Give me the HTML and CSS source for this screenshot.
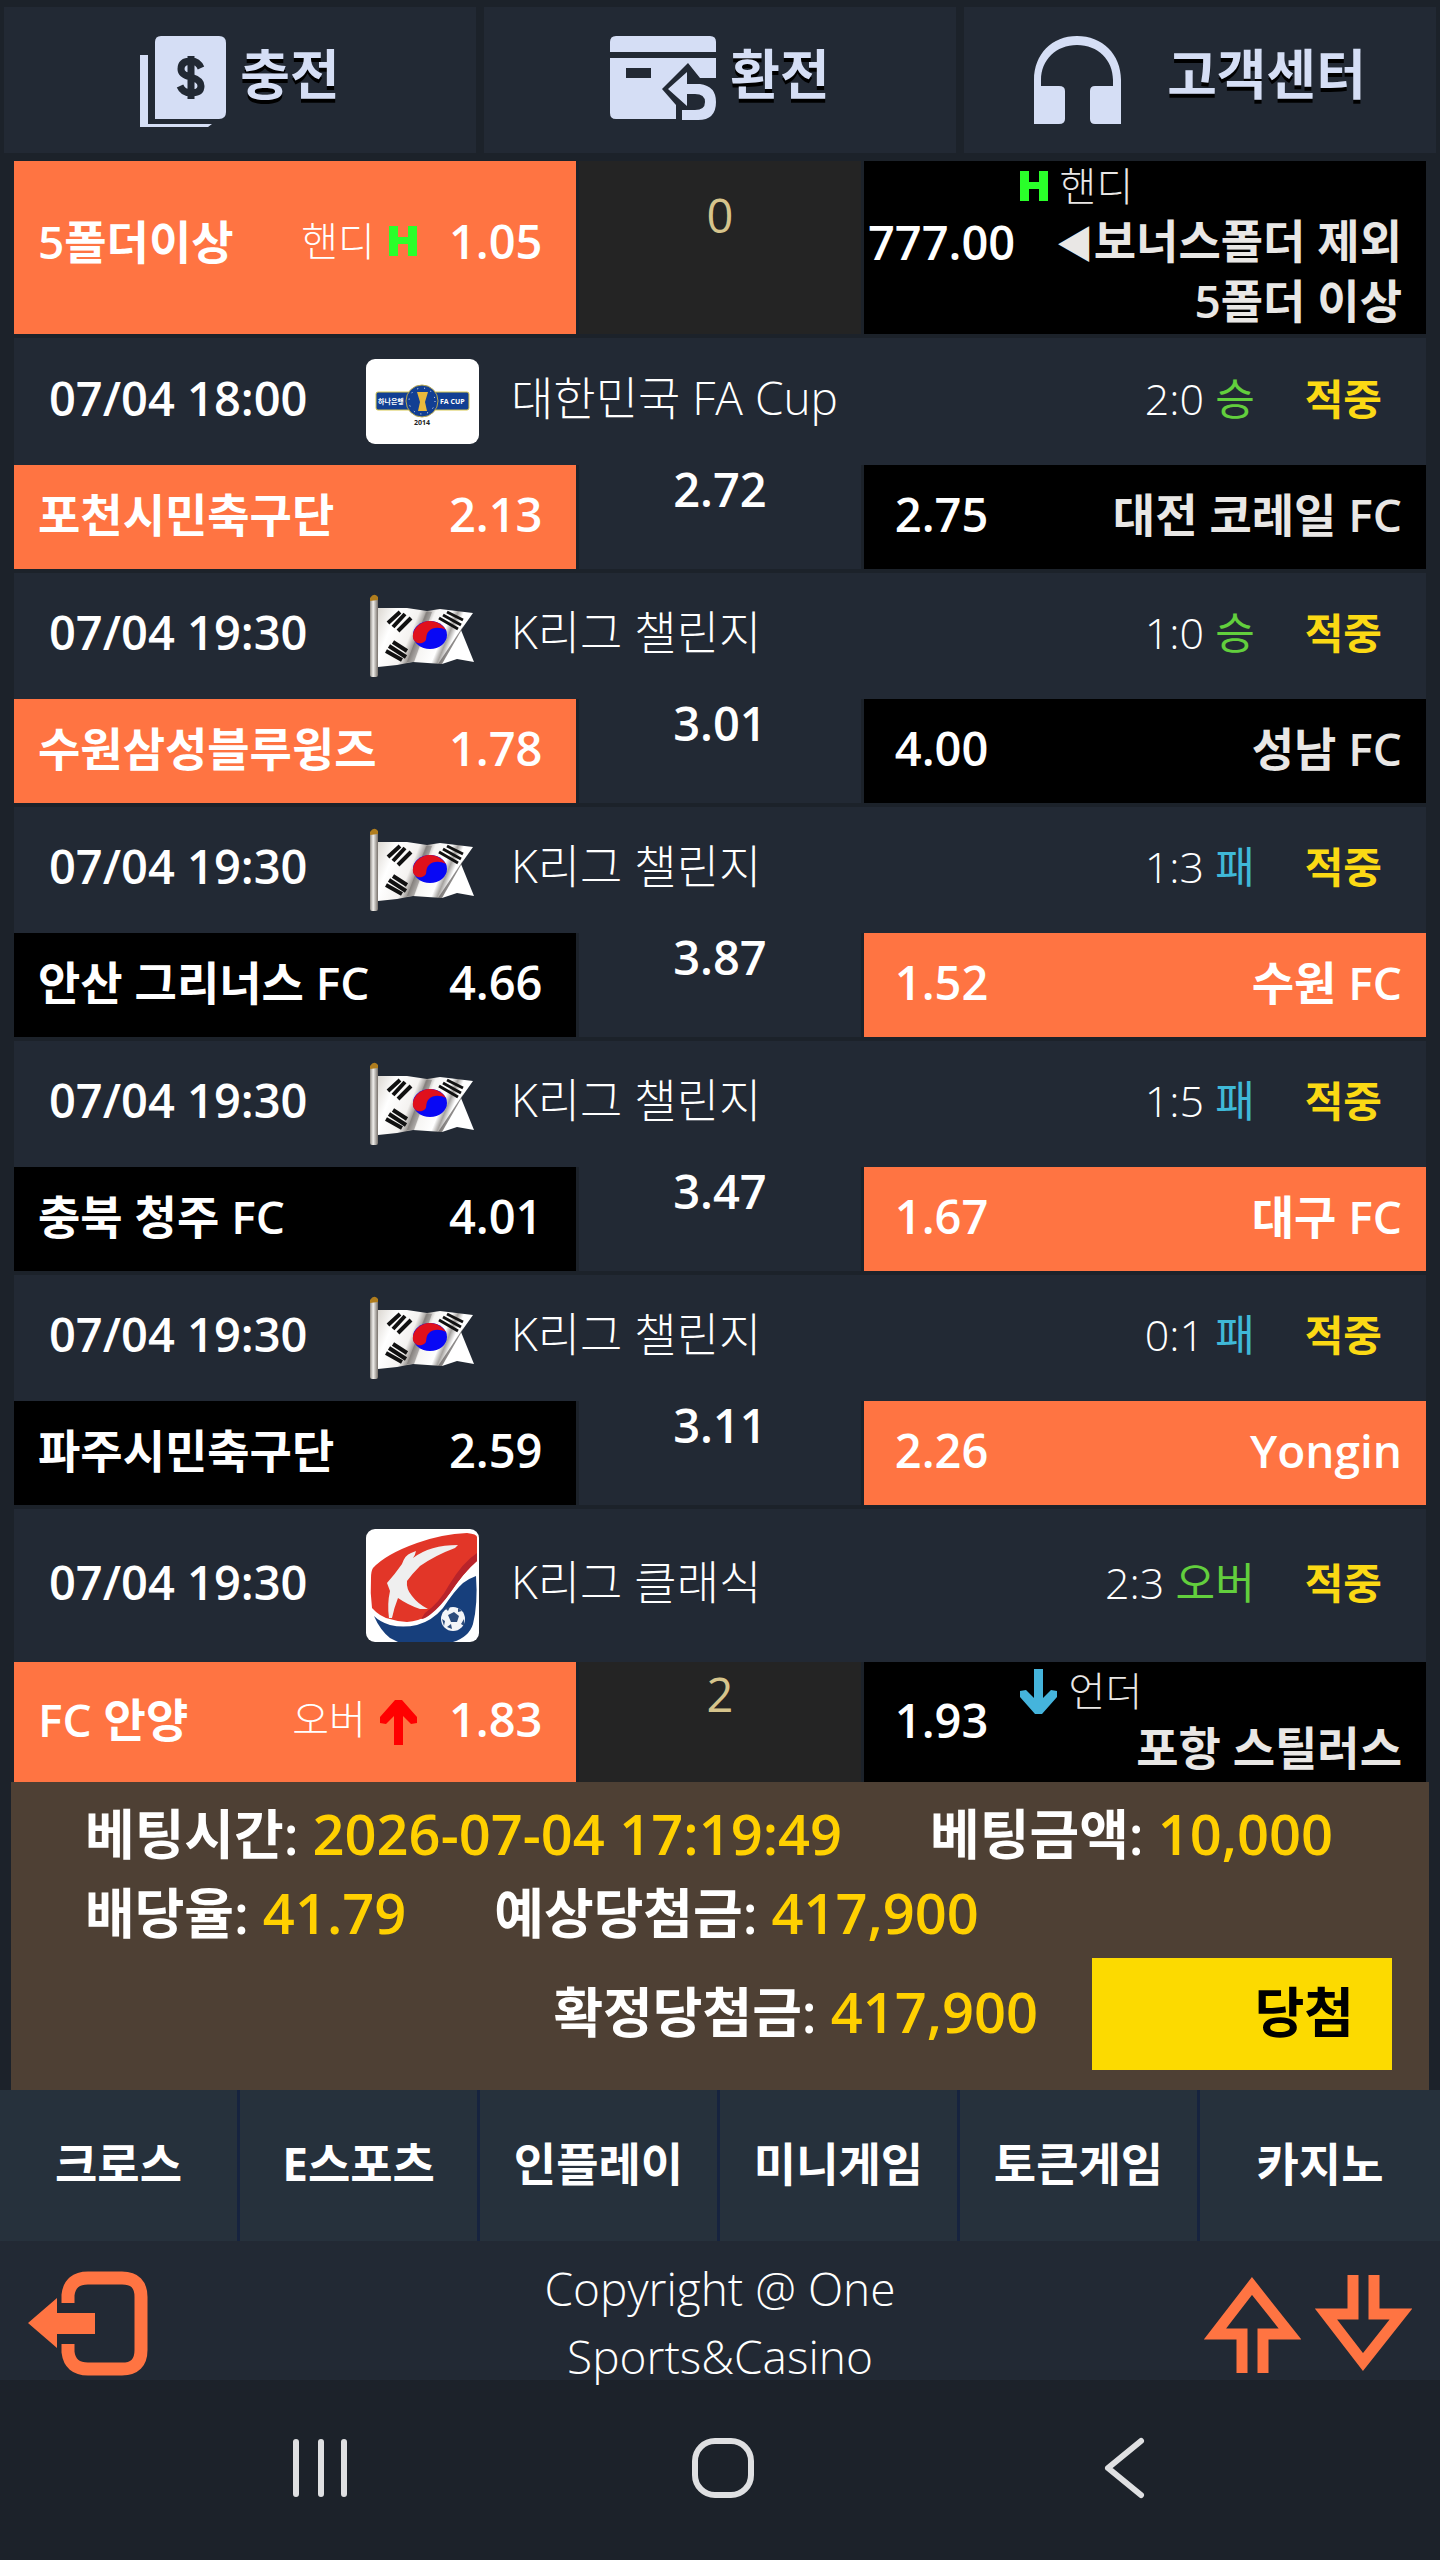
FILE: index.html
```html
<!DOCTYPE html>
<html lang="ko">
<head>
    <meta charset="UTF-8">
    <meta name="viewport" content="width=device-width, initial-scale=1.0">
    <title>One Sports&amp;Casino</title>
    <link rel="stylesheet" href="styles.css">
</head>
<body>
    <svg class="defs" width="0" height="0" aria-hidden="true">
        <defs>
            <linearGradient id="pole" x1="0" x2="1" y1="0" y2="0">
                <stop offset="0" stop-color="#8d8984"/>
                <stop offset="0.4" stop-color="#f1efec"/>
                <stop offset="1" stop-color="#77716b"/>
            </linearGradient>
            <linearGradient id="cloth" x1="0" x2="1" y1="0" y2="0.25">
                <stop offset="0" stop-color="#dcd8d2"/>
                <stop offset="0.2" stop-color="#ffffff"/>
                <stop offset="0.42" stop-color="#f4f2f0"/>
                <stop offset="0.5" stop-color="#9a9692"/>
                <stop offset="0.58" stop-color="#f6f5f3"/>
                <stop offset="0.74" stop-color="#ffffff"/>
                <stop offset="0.8" stop-color="#a5a29f"/>
                <stop offset="0.86" stop-color="#ffffff"/>
            </linearGradient>
            <symbol id="flag" viewBox="0 0 113 84">
                <rect x="4" y="4" width="8" height="79" rx="2" fill="url(#pole)"/>
                <path d="M4 7V4q4-6 8-1v3z" fill="#b07d1e"/>
                <path d="M12 14l29 0 20 3 13-2 33 4-12 17 13 32-17-3-15 5-29-2-16 3-19 2z" fill="url(#cloth)"/>
                <path d="M60 18l6 0-18 50-7 0z" fill="#6d6966" opacity="0.45"/>
                <path d="M98 31l-3 6-19 33-4 0z" fill="#5c5957" opacity="0.7"/>
                <ellipse cx="64" cy="41" rx="17" ry="14" fill="#0808f5"/>
                <path d="M47 44c-1-9 7-17 17-17 7 0 13 4 16 9-6-3-13-3-17 1-5 5 0 10-7 12-4 1-8-1-9-5z" fill="#e0101c"/>
                <g stroke="#111" stroke-width="4">
                    <path d="M22 29l12-11M27 33l12-13M32 37l13-13"/>
                    <path d="M20 57l16 9M23 52l17 11M27 48l14 9"/>
                    <path d="M73 24l19 11M77 21l18 10M81 18l16 8" stroke-width="3"/>
                </g>
            </symbol>
        </defs>
    </svg>

    <header class="top-menu">
        <a class="top-link" href="#charge">
            <svg width="86" height="91" viewBox="0 0 86 91" fill="#d5def5" aria-hidden="true">
                <path d="M0 19h8v69h64l-4 3H0z"/>
                <path d="M21 0h58q7 0 7 7v69q0 7-7 7H15V6q0-6 6-6z"/>
                <path d="M61 32q-3-7-10-7-10 0-10 8 0 6 10 8 10 3 10 9 0 7-10 7-8 0-11-7M51 20v43" fill="none" stroke="#222934" stroke-width="7"/>
            </svg>
            <span>충전</span>
        </a>
        <a class="top-link" href="#withdraw">
            <svg width="106" height="84" viewBox="0 0 106 84" fill="#d5def5" aria-hidden="true">
                <path d="M0 16V6q0-6 6-6h94q6 0 6 6v10z"/>
                <path d="M0 22h106v20H90L78 27 52 53l14 16v14H6q-6 0-6-6z"/>
                <path d="M16 32h25v10H16z" fill="#222934"/>
                <path d="M77 36v12h13q16 2 16 18 0 18-18 18H72V74h13q10 0 10-8 0-8-10-8h-8v12L58 53z"/>
            </svg>
            <span>환전</span>
        </a>
        <a class="top-link support" href="#support">
            <svg width="87" height="88" viewBox="0 0 87 88" fill="#d5def5" aria-hidden="true">
                <path d="M0 88V44C0 18 18 0 43 0s44 18 44 44v44H61q-5 0-5-5V55q0-5 5-5h18v-6C79 24 64 9 43 9S7 24 7 44v6h18q6 0 6 5v28q0 5-6 5z"/>
            </svg>
            <span>고객센터</span>
        </a>
    </header>

    <main class="slip">
        <section class="game bonus">
            <div class="odds-row">
                <div class="pick home on">
                    <span class="team">5폴더이상</span>
                    <span class="kind">핸디</span>
                    <svg width="28" height="30" viewBox="0 0 28 30" aria-hidden="true"><path d="M0 0h9v11h10V0h9v30h-9V18H9v12H0z" fill="#2aff2a"/></svg>
                    <span class="rate">1.05</span>
                </div>
                <div class="draw line">0</div>
                <div class="pick away">
                    <span class="rate">777.00</span>
                    <div class="side">
                        <div class="kind-row">
                            <svg width="28" height="30" viewBox="0 0 28 30" aria-hidden="true"><path d="M0 0h9v11h10V0h9v30h-9V18H9v12H0z" fill="#2aff2a"/></svg>
                            <span class="kind">핸디</span>
                        </div>
                        <div class="team"><span class="mark">◀</span>보너스폴더 제외<br>5폴더 이상</div>
                    </div>
                </div>
            </div>
        </section>

        <section class="game">
            <div class="match">
                <time class="time">07/04 18:00</time>
                <svg class="league-icon" width="113" height="85" viewBox="0 0 113 85" aria-hidden="true">
                    <rect width="113" height="85" rx="9" fill="#fff"/>
                    <rect x="10" y="33" width="93" height="18" rx="2" fill="#123f93" stroke="#d9c94e"/>
                    <circle cx="56" cy="42" r="16" fill="#123f93" stroke="#b9a94e" stroke-width="1"/>
                    <circle cx="56" cy="42" r="13" fill="none" stroke="#fff" stroke-width="1" stroke-dasharray="1 6"/>
                    <path d="M51 33h11l-3 10 2 9h-9l2-9z" fill="#e9b93c"/>
                    <text x="12" y="45" class="logo-text" fill="#fff">하나은행</text>
                    <text x="74" y="45" class="logo-text" fill="#fff">FA CUP</text>
                    <text x="56" y="66" class="logo-text" text-anchor="middle" fill="#222">2014</text>
                </svg>
                <span class="league">대한민국 FA Cup</span>
                <span class="score">2:0 <em class="win">승</em></span>
                <strong class="hit">적중</strong>
            </div>
            <div class="odds-row">
                <div class="pick home on"><span class="team">포천시민축구단</span><span class="rate">2.13</span></div>
                <div class="draw">2.72</div>
                <div class="pick away"><span class="rate">2.75</span><span class="team">대전 코레일 FC</span></div>
            </div>
        </section>

        <section class="game">
            <div class="match">
                <time class="time">07/04 19:30</time>
                <svg class="league-icon" width="113" height="84" aria-hidden="true"><use href="#flag"/></svg>
                <span class="league">K리그 챌린지</span>
                <span class="score">1:0 <em class="win">승</em></span>
                <strong class="hit">적중</strong>
            </div>
            <div class="odds-row">
                <div class="pick home on"><span class="team">수원삼성블루윙즈</span><span class="rate">1.78</span></div>
                <div class="draw">3.01</div>
                <div class="pick away"><span class="rate">4.00</span><span class="team">성남 FC</span></div>
            </div>
        </section>

        <section class="game">
            <div class="match">
                <time class="time">07/04 19:30</time>
                <svg class="league-icon" width="113" height="84" aria-hidden="true"><use href="#flag"/></svg>
                <span class="league">K리그 챌린지</span>
                <span class="score">1:3 <em class="lose">패</em></span>
                <strong class="hit">적중</strong>
            </div>
            <div class="odds-row">
                <div class="pick home"><span class="team">안산 그리너스 FC</span><span class="rate">4.66</span></div>
                <div class="draw">3.87</div>
                <div class="pick away on"><span class="rate">1.52</span><span class="team">수원 FC</span></div>
            </div>
        </section>

        <section class="game">
            <div class="match">
                <time class="time">07/04 19:30</time>
                <svg class="league-icon" width="113" height="84" aria-hidden="true"><use href="#flag"/></svg>
                <span class="league">K리그 챌린지</span>
                <span class="score">1:5 <em class="lose">패</em></span>
                <strong class="hit">적중</strong>
            </div>
            <div class="odds-row">
                <div class="pick home"><span class="team">충북 청주 FC</span><span class="rate">4.01</span></div>
                <div class="draw">3.47</div>
                <div class="pick away on"><span class="rate">1.67</span><span class="team">대구 FC</span></div>
            </div>
        </section>

        <section class="game">
            <div class="match">
                <time class="time">07/04 19:30</time>
                <svg class="league-icon" width="113" height="84" aria-hidden="true"><use href="#flag"/></svg>
                <span class="league">K리그 챌린지</span>
                <span class="score">0:1 <em class="lose">패</em></span>
                <strong class="hit">적중</strong>
            </div>
            <div class="odds-row">
                <div class="pick home"><span class="team">파주시민축구단</span><span class="rate">2.59</span></div>
                <div class="draw">3.11</div>
                <div class="pick away on"><span class="rate">2.26</span><span class="team">Yongin</span></div>
            </div>
        </section>

        <section class="game total">
            <div class="match">
                <time class="time">07/04 19:30</time>
                <svg class="league-icon" width="113" height="113" viewBox="0 0 113 113" aria-hidden="true">
                    <rect width="113" height="113" rx="9" fill="#fff"/>
                    <path d="M111 8q0-3-10-4Q76 5 51 14 20 25 7 39q-2 3-2 10-1 15 1 30 8 9 18 11 9 3 17 3 12-1 20-6 11-7 23-23 14-21 27-32z" fill="#e23628"/>
                    <path d="M111 24q-14 9-28 32Q74 73 59 84l-4 6q4 0 10-5 10-8 19-21 14-21 27-32z" fill="#b8232a"/>
                    <path d="M8 87q6 14 16 22l8 4h55q16-5 20-18 5-20 3-48-6 2-13 7-8 7-20 25-11 13-26 17-14 3-27 0-10-3-16-9z" fill="#173f7c"/>
                    <path d="M92 16l-3 3Q70 26 54 37q-8 8-13 15-1 8 5 15 6 8 16 13h-8q-12-4-22-11-4 10-6 20h-3q-2-14 1-27l-3-8q8-9 15-19 3-9 9-11l5-2q-1 5-3 7 17-13 45-13z" fill="#efefef"/>
                    <circle cx="87" cy="90" r="12" fill="#f3f5f8"/>
                    <path d="M82 86l6-3 5 4-2 6h-6zM79 79l5-1-2 4zM92 79l4 3-4 1zM76 90l3 2-1 5zM86 100l-5-2 4-3zM98 90l-3 5 3 2z" fill="#2d4c7c"/>
                </svg>
                <span class="league">K리그 클래식</span>
                <span class="score">2:3 <em class="win">오버</em></span>
                <strong class="hit">적중</strong>
            </div>
            <div class="odds-row">
                <div class="pick home on">
                    <span class="team">FC 안양</span>
                    <span class="kind">오버</span>
                    <svg width="37" height="45" viewBox="0 0 37 45" aria-hidden="true"><path d="M15 0h7l15 17v6l-6 1-8-8v29h-9V16l-8 8-6-1v-6z" fill="#f00"/></svg>
                    <span class="rate">1.83</span>
                </div>
                <div class="draw line">2</div>
                <div class="pick away">
                    <span class="rate">1.93</span>
                    <div class="side">
                        <div class="kind-row">
                            <svg width="37" height="45" viewBox="0 0 37 45" aria-hidden="true"><path d="M15 45h7l15-17v-6l-6-1-8 8V0h-9v29l-8-8-6 1v6z" fill="#45b4dc"/></svg>
                            <span class="kind">언더</span>
                        </div>
                        <div class="team">포항 스틸러스</div>
                    </div>
                </div>
            </div>
        </section>
    </main>

    <section class="summary">
        <p>베팅시간: <b>2026-07-04 17:19:49</b></p>
        <p>베팅금액: <b>10,000</b></p>
        <p>배당율: <b>41.79</b></p>
        <p>예상당첨금: <b>417,900</b></p>
        <div class="result">
            <p>확정당첨금: <b>417,900</b></p>
            <button type="button">당첨</button>
        </div>
    </section>

    <nav class="tabs">
        <a href="#cross">크로스</a>
        <a href="#esports">E스포츠</a>
        <a href="#inplay">인플레이</a>
        <a href="#mini">미니게임</a>
        <a href="#token">토큰게임</a>
        <a href="#casino">카지노</a>
    </nav>

    <footer>
        <a class="logout" href="#logout" aria-label="로그아웃">
            <svg width="120" height="105" viewBox="0 0 120 105" fill="#ff7442" aria-hidden="true">
                <path d="M0 52l29-25v15h38v21H29v14z"/>
                <path d="M40 32v-8Q42 7 60 7h34q19 0 19 19v53q0 19-19 19H60Q42 98 40 81v-8" fill="none" stroke="#ff7442" stroke-width="13"/>
            </svg>
        </a>
        <p class="copy">Copyright @ One<br>Sports&amp;Casino</p>
        <div class="scroll">
            <a href="#top" aria-label="위로">
                <svg width="97" height="98" viewBox="0 0 97 98" fill="none" stroke="#ff7442" stroke-width="11" aria-hidden="true"><path d="M38 98V59H11L48 11l38 48H59v39"/></svg>
            </a>
            <a href="#bottom" aria-label="아래로">
                <svg width="97" height="98" viewBox="0 0 97 98" fill="none" stroke="#ff7442" stroke-width="11" aria-hidden="true"><path d="M38 0v39H11l37 48 38-48H59V0"/></svg>
            </a>
        </div>
    </footer>

    <nav class="system">
        <button type="button" aria-label="최근 앱">
            <svg width="62" height="62" viewBox="0 0 62 62" aria-hidden="true"><path d="M6 5v52M31 5v52M54 5v52"/></svg>
        </button>
        <button type="button" aria-label="홈">
            <svg width="62" height="62" viewBox="0 0 62 62" aria-hidden="true"><rect x="3" y="4" width="56" height="54" rx="20"/></svg>
        </button>
        <button type="button" aria-label="뒤로">
            <svg width="62" height="62" viewBox="0 0 62 62" aria-hidden="true"><path d="M47 4L14 31l33 27"/></svg>
        </button>
    </nav>
</body>
</html>
```
FILE: styles.css
```css
* {
    box-sizing: border-box;
}
body {
    margin: 0;
    background-color: #1c222a;
    color: white;
    font-family: 'Open Sans', 'Noto Sans CJK KR', sans-serif;
    font-size: 46px;
    font-weight: 600;
    line-height: 60px;
}
a {
    color: inherit;
    text-decoration: none;
}
p {
    margin: 0;
}
svg {
    display: block;
    flex: none;
}
.defs {
    position: absolute;
}

/* top menu */
.top-menu {
    display: grid;
    grid-template-columns: repeat(3, 1fr);
    gap: 8px;
    padding: 7px 4px 8px;
}
.top-link {
    display: flex;
    justify-content: center;
    gap: 14px;
    height: 146px;
    padding-top: 29px;
    background-color: #222934;
    color: #d5def5;
    font-size: 54px;
    line-height: 76px;
    font-weight: 700;
    text-shadow: 0 4px 0 #000;
}
.top-link.support {
    gap: 46px;
}

/* bet slip */
.slip {
    display: grid;
    gap: 4px;
    padding: 0 14px;
}
.match {
    display: flex;
    align-items: center;
    padding: 21px 44px 21px 35px;
    background-color: #222934;
}
.total .match {
    padding-top: 20px;
    padding-bottom: 20px;
}
.time {
    width: 317px;
    padding-bottom: 8px;
    font-size: 47px;
}
.league {
    flex: 1;
    padding: 0 0 10px 32px;
    font-weight: 300;
}
.logo-text {
    font-size: 7px;
    font-weight: 700;
}
.score {
    padding-bottom: 6px;
    font-size: 43px;
    font-weight: 300;
}
.score em {
    font-style: normal;
    font-weight: 400;
}
.win {
    color: #62cf3d;
}
.lose {
    color: #3fb9d8;
}
.hit {
    margin-left: 50px;
    padding-bottom: 6px;
    color: #fbd914;
    font-size: 42px;
    font-weight: 700;
}
.odds-row {
    display: grid;
    grid-template-columns: 2fr 1fr 2fr;
    gap: 3px;
    min-height: 104px;
}
.pick {
    display: flex;
    align-items: center;
    padding-bottom: 6px;
    background-color: #000;
    white-space: nowrap;
}
.pick.on {
    background-color: #ff7442;
}
.rate {
    font-size: 47px;
}
.home {
    padding-left: 24px;
    padding-right: 34px;
}
.home .team {
    flex: 1;
}
.home svg {
    margin: 0 32px 0 14px;
}
.total .home svg {
    margin-top: 6px;
}
.away {
    padding-right: 24px;
    text-align: right;
}
.away .team {
    flex: 1;
    color: #e9e7e5;
}
.away.on .team {
    color: white;
}
.away .rate {
    width: 156px;
    text-align: center;
}
.side {
    flex: 1;
}
.mark {
    font-size: 38px;
    line-height: 1;
}
.kind-row {
    display: flex;
    align-items: center;
    gap: 12px;
    line-height: 52px;
    color: #e9e7e5;
}
.kind {
    font-size: 40px;
    font-weight: 300;
}
.draw {
    background-color: #222934;
    text-align: center;
    font-size: 47px;
    line-height: 48px;
}
.draw.line {
    background-color: #242424;
    color: #d6c48c;
    font-weight: 400;
    line-height: 64px;
}
.bonus .odds-row {
    min-height: 173px;
}
.bonus .home {
    padding-bottom: 14px;
}
.bonus .away {
    padding-bottom: 4px;
}
.bonus .away .rate {
    padding-bottom: 8px;
}
.bonus .kind-row {
    line-height: 48px;
}
.bonus .line {
    padding-top: 22px;
}
.total .odds-row {
    min-height: 120px;
}
.total .away {
    padding-bottom: 4px;
}
.total .side {
    padding-top: 2px;
}

/* summary */
.summary {
    display: flex;
    flex-wrap: wrap;
    column-gap: 88px;
    margin: 0 11px;
    padding: 13px 37px 20px 74px;
    background-color: #4e4034;
    font-size: 54px;
    line-height: 79px;
}
.summary b {
    color: #ffd000;
    font-size: 56px;
    font-weight: 600;
    line-height: 1;
}
.result {
    display: flex;
    justify-content: flex-end;
    align-items: center;
    gap: 54px;
    width: 100%;
    margin-top: 5px;
}
.result p {
    padding-bottom: 4px;
}
.result button {
    width: 300px;
    height: 112px;
    padding: 0 38px 4px 0;
    border: none;
    background-color: #fcda00;
    color: #000;
    font: inherit;
    text-align: right;
}

/* tabs */
.tabs {
    display: grid;
    grid-template-columns: repeat(6, 1fr);
}
.tabs a {
    padding: 43px 0 48px;
    border-right: 3px solid #16233f;
    background-color: #26313c;
    text-align: center;
    font-weight: 700;
}
.tabs a:last-child {
    border-right: none;
}

footer {
    display: grid;
    grid-template-columns: 1fr auto 1fr;
    height: 139px;
    padding: 13px 28px 0;
    background-color: #222934;
}
.logout {
    padding-top: 17px;
}
.copy {
    text-align: center;
    font-weight: 300;
    line-height: 68px;
}
.scroll {
    display: flex;
    justify-content: flex-end;
    gap: 14px;
    padding-top: 21px;
}

/* system bar */
.system {
    display: flex;
    justify-content: center;
    gap: 340px;
    height: 178px;
    padding: 0 0 2px 6px;
}
.system button {
    display: flex;
    align-items: center;
    padding: 0;
    border: none;
    background: none;
}
.system svg {
    fill: none;
    stroke: #dfe0e2;
    stroke-width: 6;
    stroke-linecap: round;
    stroke-linejoin: round;
}
```
